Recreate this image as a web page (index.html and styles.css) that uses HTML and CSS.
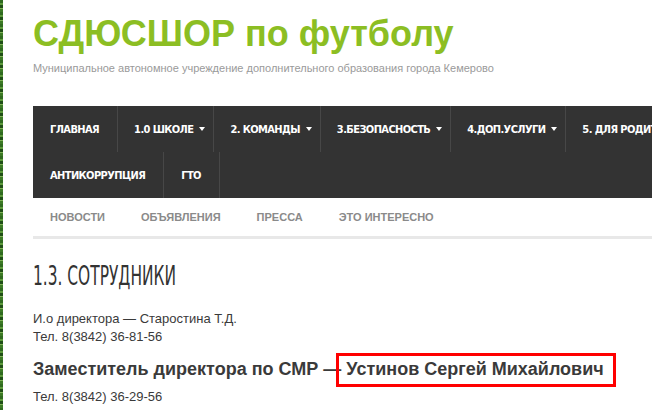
FILE: index.html
```
<!DOCTYPE html>
<html lang="ru">
<head>
<meta charset="utf-8">
<title>1.3. Сотрудники — СДЮСШОР по футболу</title>
<link rel="stylesheet" href="styles.css">
</head>
<body>
<div class="page">
  <div class="grass"></div>
  <div class="main">
    <header class="masthead">
      <h1 class="site-title">СДЮСШОР по футболу</h1>
      <p class="site-desc">Муниципальное автономное учреждение дополнительного образования города Кемерово</p>
    </header>
    <nav class="mainnav">
      <ul class="menu-row">
        <li class="item">ГЛАВНАЯ</li>
        <li class="item has-sub">1.0 ШКОЛЕ<span class="caret"></span></li>
        <li class="item has-sub">2. КОМАНДЫ<span class="caret"></span></li>
        <li class="item has-sub">3.БЕЗОПАСНОСТЬ<span class="caret"></span></li>
        <li class="item has-sub">4.ДОП.УСЛУГИ<span class="caret"></span></li>
        <li class="item has-sub">5. ДЛЯ РОДИТЕЛЕЙ<span class="caret"></span></li>
      </ul>
      <ul class="menu-row">
        <li class="item">АНТИКОРРУПЦИЯ</li>
        <li class="item">ГТО</li>
      </ul>
    </nav>
    <nav class="subnav">
      <a class="sublink">НОВОСТИ</a>
      <a class="sublink">ОБЪЯВЛЕНИЯ</a>
      <a class="sublink">ПРЕССА</a>
      <a class="sublink">ЭТО ИНТЕРЕСНО</a>
    </nav>
    <div class="rule"></div>
    <article class="entry">
      <h2 class="entry-title">1.3. СОТРУДНИКИ</h2>
      <p class="text">И.о директора — Старостина Т.Д.<br>Тел. 8(3842) 36-81-56</p>
      <p class="lead">Заместитель директора по СМР — <span class="marked">Устинов Сергей Михайлович</span></p>
      <p class="text">Тел. 8(3842) 36-29-56</p>
    </article>
  </div>
</div>
</body>
</html>
```
FILE: styles.css
```
html, body {
  margin: 0;
  padding: 0;
  background: #fff;
}
body {
  width: 652px;
  height: 410px;
  overflow: hidden;
  font-family: "Liberation Sans", Arial, sans-serif;
}
.page {
  display: flex;
  height: 410px;
}
.grass {
  flex: 0 0 3px;
  background:
    repeating-linear-gradient(180deg, #2f6a1f 0 3px, #5d9a3c 3px 5px, #1f4f16 5px 8px, #7fb257 8px 9px, #3c7a26 9px 12px);
}
.main {
  flex: 1;
  min-width: 0;
  padding-left: 30px;
}
.masthead {
  padding-top: 11px;
}
.site-title {
  margin: 0;
  font-size: 36px;
  line-height: 46px;
  font-weight: bold;
  color: #8cbe23;
  white-space: nowrap;
}
.site-desc {
  margin: 4px 0 0;
  font-size: 11px;
  line-height: 14px;
  color: #9a9a9a;
  white-space: nowrap;
}
.mainnav {
  margin-top: 31px;
  background: #333;
  width: 700px;
}
.menu-row {
  display: flex;
  margin: 0;
  padding: 0;
  list-style: none;
  white-space: nowrap;
}
.item {
  display: flex;
  align-items: center;
  height: 46px;
  padding: 0 18px 0 17px;
  border-right: 1px solid #474747;
  color: #fff;
  font-family: "DejaVu Sans Condensed", sans-serif;
  font-weight: bold;
  font-size: 11px;
  letter-spacing: -0.6px;
}
.has-sub {
  padding-left: 16px;
  padding-right: 8px;
}
.caret {
  display: inline-block;
  margin-left: 6px;
  width: 0;
  height: 0;
  border-left: 3.5px solid transparent;
  border-right: 3.5px solid transparent;
  border-top: 4px solid #fff;
}
.subnav {
  display: flex;
  height: 38px;
  align-items: center;
  padding-left: 17px;
  gap: 36px;
}
.sublink {
  font-size: 11px;
  font-weight: bold;
  color: #8a8a8a;
}
.rule {
  height: 3px;
  background: #e8e8e8;
}
.entry-title {
  margin: 21px 0 0;
  font-family: "DejaVu Sans Condensed", sans-serif;
  font-weight: normal;
  font-size: 27px;
  line-height: 32px;
  color: #333;
  white-space: nowrap;
  transform: scaleX(0.635);
  transform-origin: left center;
}
.text {
  margin: 18px 0 0;
  font-size: 13px;
  line-height: 18px;
  color: #3a3a3a;
}
.lead {
  margin: 11px 0 0;
  font-size: 18px;
  line-height: 24px;
  font-weight: bold;
  color: #3a3a3a;
  white-space: nowrap;
}
.lead + .text {
  margin-top: 7px;
}
.marked {
  position: relative;
}
.marked::after {
  content: "";
  position: absolute;
  left: -10px;
  right: -12px;
  top: -6px;
  bottom: -8px;
  border: 3px solid #ff0000;
}
```
